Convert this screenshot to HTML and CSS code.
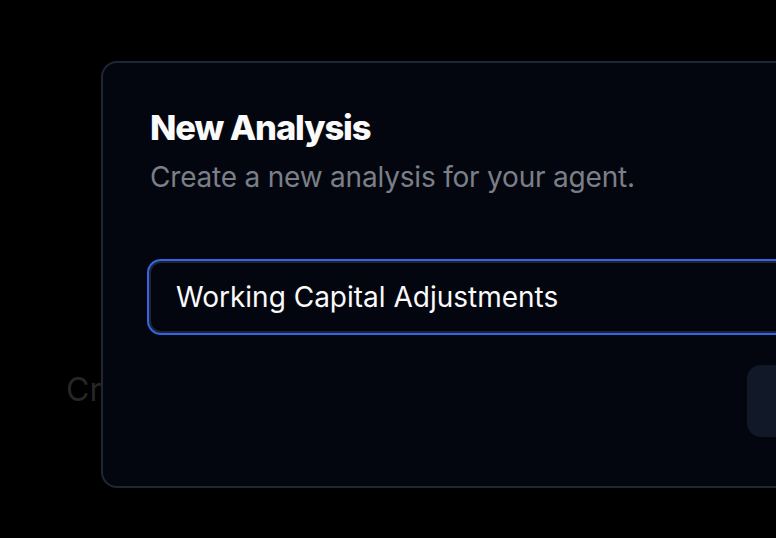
FILE: index.html
```html
<!DOCTYPE html>
<html lang="en">
<head>
  <meta charset="UTF-8">
  <title>New Analysis</title>
  <link rel="stylesheet" href="styles.css">
</head>
<body>
  <div class="page">
    <p class="behind">Create your first analysis</p>
  </div>

  <div class="dialog">
    <div class="dialog-header">
      <h2 class="dialog-title">New Analysis</h2>
      <p class="dialog-desc">Create a new analysis for your agent.</p>
    </div>
    <input class="name-input" type="text" value="Working Capital Adjustments">
    <div class="dialog-footer">
      <button class="btn-secondary">Cancel</button>
      <button class="btn-primary">Create</button>
    </div>
  </div>
</body>
</html>
```

FILE: styles.css
```css
body { margin: 0; background: #000; font-family: Inter, "Noto Sans", sans-serif; overflow: hidden; }
.page { height: 538px; padding: 0 0 0 66px; box-sizing: border-box; }
.behind { margin: 0; padding-top: 370px; font-size: 32px; line-height: 40px; color: #262626; white-space: nowrap; }

.dialog { position: absolute; left: 101px; top: 61px; width: 880px; height: 427px; box-sizing: border-box; padding: 44px 46px 46px; background: #04060f; border: 2px solid #1f2636; border-radius: 16px; }
.dialog-header { display: flex; flex-direction: column; gap: 8px; }
.dialog-title { margin: 0 0 0 1px; font-size: 34.5px; line-height: 42px; font-weight: 800; color: #fafafa; letter-spacing: -1.1px; }
.dialog-desc { margin: 0 0 0 1px; font-size: 28px; line-height: 40px; color: #7b7f87; letter-spacing: -0.2px; }

.name-input { display: block; margin-top: 64px; width: 100%; height: 72px; box-sizing: border-box; padding: 0 26px 0 25px; background: #04060f; border: 2px solid #1e2433; border-radius: 12px; box-shadow: 0 0 0 2px #3266e3; font-family: inherit; font-size: 28px; color: #fafafa; outline: none; }

.dialog-footer { display: flex; gap: 16px; margin-top: 32px; margin-left: 598px; }
.dialog-footer button { height: 72px; padding: 0 32px; border: none; border-radius: 14px; font-family: inherit; font-size: 28px; font-weight: 500; }
.btn-secondary { background: #111827; color: #fafafa; }
.btn-primary { background: #fafafa; color: #111827; }
```
